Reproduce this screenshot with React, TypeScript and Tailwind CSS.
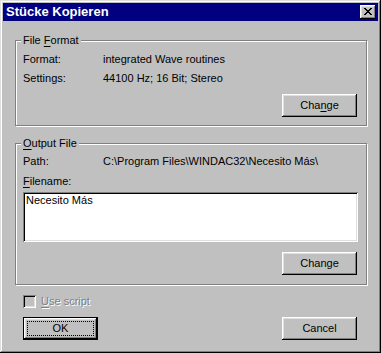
const raised =
  "shadow-[inset_-1px_-1px_0_#000,inset_1px_1px_0_#fff,inset_-2px_-2px_0_#808080,inset_2px_2px_0_#dfdfdf]";
const sunken =
  "shadow-[inset_1px_1px_0_#808080,inset_-1px_-1px_0_#fff,inset_2px_2px_0_#000,inset_-2px_-2px_0_#dfdfdf]";

function CloseGlyph() {
  // 8x7 pixel X, wie bei Win95
  const rows = [
    [0, 1, 6, 7],
    [1, 2, 5, 6],
    [2, 3, 4, 5],
    [3, 4],
    [2, 3, 4, 5],
    [1, 2, 5, 6],
    [0, 1, 6, 7],
  ];
  return (
    <svg width="8" height="7" viewBox="0 0 8 7" shapeRendering="crispEdges">
      {rows.map((cols, y) =>
        cols.map((x) => <rect key={`${x}-${y}`} x={x} y={y} width="1" height="1" fill="#000" />)
      )}
    </svg>
  );
}

function Button({ label, accel }: { label: string; accel?: number }) {
  return (
    <button
      className={`w-[75px] h-[23px] bg-[#c0c0c0] ${raised} flex items-center justify-center pb-[1px]`}
    >
      {accel === undefined ? (
        label
      ) : (
        <span>
          {label.slice(0, accel)}
          <span className="underline underline-offset-[2px]">{label[accel]}</span>
          {label.slice(accel + 1)}
        </span>
      )}
    </button>
  );
}

function Row({ label, value }: { label: React.ReactNode; value?: string }) {
  return (
    <div className="flex h-[13px]">
      <span className="w-[80px]">{label}</span>
      {value && <span>{value}</span>}
    </div>
  );
}

export default function App() {
  return (
    <div
      className={`w-[381px] h-[353px] bg-[#c0c0c0] p-[3px] flex flex-col text-black text-[11px] leading-[13px] font-[family-name:'Liberation_Sans',Arial,sans-serif] shadow-[inset_-1px_-1px_0_#000,inset_1px_1px_0_#dfdfdf,inset_-2px_-2px_0_#808080,inset_2px_2px_0_#fff]`}
    >
      {/* Titelleiste */}
      <div className="h-[18px] bg-[#000080] flex items-center pl-[3px] pr-[2px]">
        <span className="flex-1 text-white font-bold text-[13px] leading-[16px]">Stücke Kopieren</span>
        <button className={`w-[16px] h-[14px] bg-[#c0c0c0] ${raised} flex items-start pl-[4px] pt-[3px]`}>
          <CloseGlyph />
        </button>
      </div>

      {/* File Format */}
      <div className="relative mt-[19px] ml-[12px] mr-[11px] border border-[#808080] shadow-[inset_1px_1px_0_#fff,1px_1px_0_#fff] pt-[12px] pl-[7px] pr-[8px] pb-[8px] flex flex-col">
        <span className="absolute -top-[7px] left-[5px] px-[2px] bg-[#c0c0c0]">
          File <span className="underline underline-offset-[2px]">F</span>ormat
        </span>
        <div className="flex flex-col gap-[6px]">
          <Row label="Format:" value="integrated Wave routines" />
          <Row label="Settings:" value="44100 Hz; 16 Bit; Stereo" />
        </div>
        <div className="self-end mt-[9px] mr-[1px]">
          <Button label="Change" accel={3} />
        </div>
      </div>

      {/* Output File */}
      <div className="relative mt-[17px] ml-[12px] mr-[11px] border border-[#808080] shadow-[inset_1px_1px_0_#fff,1px_1px_0_#fff] pt-[11px] pl-[7px] pr-[8px] pb-[9px] flex flex-col">
        <span className="absolute -top-[7px] left-[5px] px-[2px] bg-[#c0c0c0]">
          <span className="underline underline-offset-[2px]">O</span>utput File
        </span>
        <div className="flex flex-col gap-[7px]">
          <Row label="Path:" value="C:\Program Files\WINDAC32\Necesito Más\" />
          <Row
            label={
              <>
                <span className="underline underline-offset-[2px]">F</span>ilename:
              </>
            }
          />
        </div>
        <div className={`mt-[4px] h-[50px] bg-white ${sunken} pl-[3px] pt-[2px]`}>Necesito Más</div>
        <div className="self-end mt-[10px] mr-[1px]">
          <Button label="Change" />
        </div>
      </div>

      {/* Checkbox (deaktiviert) */}
      <div className="mt-[10px] ml-[20px] flex items-center h-[13px] gap-[5px]">
        <span className={`w-[13px] h-[13px] bg-[#c0c0c0] ${sunken}`} />
        <span className="text-[#808080] [text-shadow:1px_1px_0_#fff]">
          <span className="underline underline-offset-[2px]">U</span>se script
        </span>
      </div>

      {/* OK / Cancel */}
      <div className="mt-[9px] ml-[20px] mr-[21px] flex justify-between">
        <button className={`w-[75px] h-[23px] bg-[#c0c0c0] border border-black ${raised} p-[3px] flex`}>
          <span className="flex-1 border border-dotted border-black flex items-center justify-center pb-[1px]">
            OK
          </span>
        </button>
        <Button label="Cancel" />
      </div>
    </div>
  );
}
